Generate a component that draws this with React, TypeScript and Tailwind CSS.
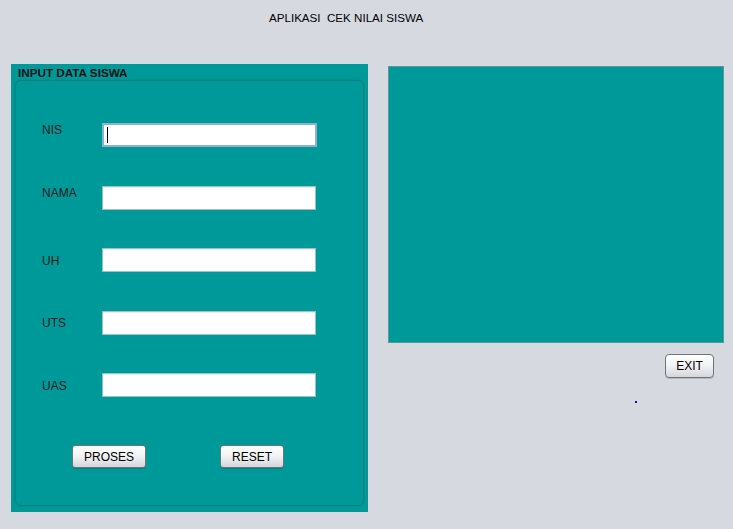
import * as React from "react"

const fields = [
  { label: "NIS", labelTop: "mt-0", focused: true },
  { label: "NAMA", labelTop: "mt-0" },
  { label: "UH", labelTop: "mt-[6px]" },
  { label: "UTS", labelTop: "mt-[5px]" },
  { label: "UAS", labelTop: "mt-[6px]" },
]

const SwingButton = ({ label, className }: { label: string; className: string }) => (
  <button
    className={`flex items-center justify-center rounded-[3px] border border-[#6f7479] bg-gradient-to-b from-[#ffffff] via-[#f1f2f4] to-[#d3d6db] text-[12px] text-black shadow-[0_1px_0_rgba(0,0,0,0.15)] ${className}`}
  >
    {label}
  </button>
)

const FieldRow = ({
  label,
  labelTop,
  focused,
}: {
  label: string
  labelTop: string
  focused?: boolean
}) => (
  <div className="flex h-[24px] items-start">
    <span className={`w-[60px] pl-[26px] box-content text-[12px] leading-[14px] text-[#1a1a1a] ${labelTop}`}>
      {label}
    </span>
    <div
      className={
        focused
          ? "flex h-[24px] w-[215px] items-center border-2 border-[#8fb0d6] bg-white pl-[3px]"
          : "h-[24px] w-[214px] border border-[#9cc3c3] bg-white shadow-[inset_0_1px_1px_rgba(0,0,0,0.08)]"
      }
    >
      {focused && <div className="h-[16px] w-px bg-black" />}
    </div>
  </div>
)

export default function App() {
  return (
    <div className="h-[529px] w-[733px] overflow-hidden bg-[#d6d9e0] font-['Liberation_Sans',Arial,sans-serif]">
      <div className="pl-[269px] pt-[11px] text-[11.6px] leading-[13px] text-black">
        APLIKASI&nbsp;&nbsp;CEK NILAI SISWA
      </div>

      <div className="mt-[40px] flex items-start">
        {/* input panel */}
        <section className="ml-[11px] flex h-[448px] w-[357px] flex-col bg-[#009999]">
          <h2 className="h-[16px] pl-[7px] pt-[2px] text-[11.7px] font-bold leading-[13px] text-[#111]">
            INPUT DATA SISWA
          </h2>
          <div className="mx-[4px] mb-[6px] flex flex-1 flex-col rounded-[6px] border border-[#0a8282] shadow-[0_0_2px_rgba(0,80,80,0.4)]">
            <div className="mt-[42px] flex flex-col gap-[38.5px]">
              {fields.map((f) => (
                <FieldRow key={f.label} {...f} />
              ))}
            </div>
            <div className="mt-[48px] flex">
              <SwingButton label="PROSES" className="ml-[56px] h-[23px] w-[74px]" />
              <SwingButton label="RESET" className="ml-[74px] h-[23px] w-[64px]" />
            </div>
          </div>
        </section>

        {/* output panel */}
        <div className="ml-[20px] mt-[2px] flex w-[336px] flex-col">
          <div className="h-[277px] border border-[#5b9a9c] bg-[#009999]" />
          <div className="mt-[11px] flex justify-end pr-[10px]">
            <SwingButton label="EXIT" className="h-[24px] w-[49px] rounded-[4px]" />
          </div>
          <div className="ml-[247px] mt-[23px] h-[2px] w-[2px] bg-[#1010a0]" />
        </div>
      </div>
    </div>
  )
}
